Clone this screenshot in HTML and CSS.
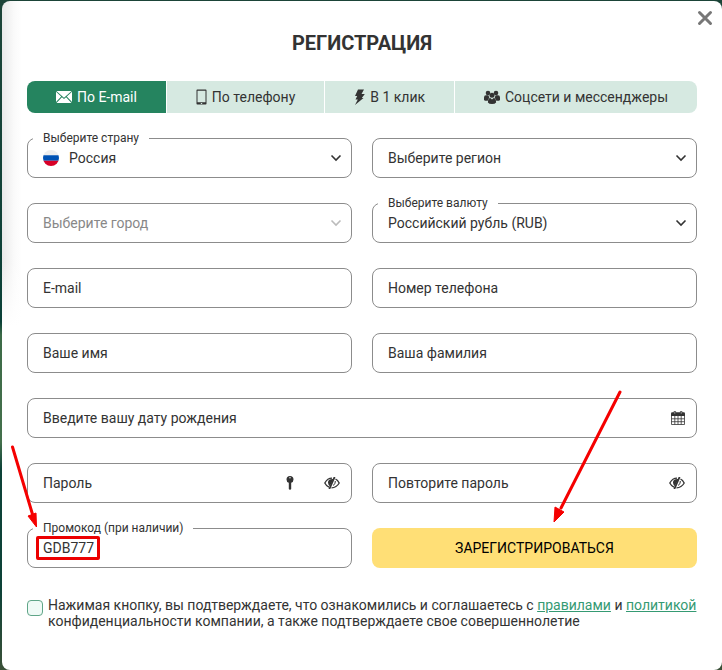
FILE: index.html
```html
<!DOCTYPE html>
<html lang="ru">
<head>
    <meta charset="UTF-8">
    <meta name="viewport" content="width=device-width, initial-scale=1.0">
    <title>Регистрация</title>
    <link rel="stylesheet" href="styles.css">
</head>
<body>
    <main class="modal">
        <button class="close" type="button" aria-label="Закрыть">
            <svg width="16" height="16" viewBox="0 0 16 16"><path d="M2.5 2.5 13.5 13.5M13.5 2.5 2.5 13.5"/></svg>
        </button>
        <h1>РЕГИСТРАЦИЯ</h1>

        <div class="tabs">
            <button class="tab active" type="button">
                <svg width="16" height="12" viewBox="0 0 16 12" fill="currentColor"><path d="M.4 0h15.2L8 6.7zM0 .8 5.2 5.6 0 11zM16 .8 10.8 5.6 16 11zM5.9 6.2 8 8l2.1-1.8 5.4 5.8H.5z"/></svg>
                По E-mail
            </button>
            <button class="tab" type="button">
                <svg width="11" height="16" viewBox="0 0 11 16" fill="currentColor"><path fill-rule="evenodd" d="M1.300.5h8.400q.8 0 .8.8v13.400q0 .8-.8.8H1.300q-.8 0-.8-.8V1.300Q.5.500 1.300.5zM1.500 1.700v11.600h8V1.700zM4.800 14h1.400v.9H4.800z"/></svg>
                По телефону
            </button>
            <button class="tab" type="button">
                <svg width="11" height="16" viewBox="0 0 11 16" fill="currentColor"><path d="M4 .5h6L7.500 5h3.300L7.800 9h1.700L1 16l2.800-5.500H1.500L3.200 7H1z"/></svg>
                В 1 клик
            </button>
            <button class="tab" type="button">
                <svg width="16" height="14" viewBox="0 0 16 14" fill="currentColor"><circle cx="4" cy="3" r="2.300"/><circle cx="12" cy="3" r="2.300"/><path d="M0 10V7.600Q0 5.200 2 5.200h2.300l1 2.300L3.700 10.800H1zM16 10V7.600Q16 5.200 14 5.200h-2.300l-1 2.300 1.600 3.300H15z"/><circle cx="8" cy="5.300" r="2.500"/><path d="M3.900 12.500q0-4.200 2.400-4.400L8 9.500l1.700-1.400q2.400.2 2.400 4.400Q11 14 8 14t-4.100-1.500z"/></svg>
                Соцсети и мессенджеры
            </button>
        </div>

        <form class="form">
            <div class="field">
                <label class="caption" for="country">Выберите страну</label>
                <svg class="flag" width="16" height="16" viewBox="0 0 16 16">
                    <clipPath id="round"><circle cx="8" cy="8" r="8"/></clipPath>
                    <g clip-path="url(#round)"><path fill="#eee" d="M0 0h16v5.300H0z"/><path fill="#0052b4" d="M0 5.300h16v5.400H0z"/><path fill="#d80027" d="M0 10.700h16V16H0z"/></g>
                </svg>
                <select id="country" class="control with-flag"><option>Россия</option></select>
                <svg class="chevron" width="12" height="8" viewBox="0 0 12 8"><path d="M1.500 1.500 6 6l4.500-4.500"/></svg>
            </div>
            <div class="field">
                <select class="control" aria-label="Выберите регион"><option>Выберите регион</option></select>
                <svg class="chevron" width="12" height="8" viewBox="0 0 12 8"><path d="M1.500 1.500 6 6l4.500-4.500"/></svg>
            </div>
            <div class="field disabled">
                <select class="control" aria-label="Выберите город" disabled><option>Выберите город</option></select>
                <svg class="chevron" width="12" height="8" viewBox="0 0 12 8"><path d="M1.500 1.500 6 6l4.500-4.500"/></svg>
            </div>
            <div class="field">
                <label class="caption" for="currency">Выберите валюту</label>
                <select id="currency" class="control"><option>Российский рубль (RUB)</option></select>
                <svg class="chevron" width="12" height="8" viewBox="0 0 12 8"><path d="M1.500 1.500 6 6l4.500-4.500"/></svg>
            </div>
            <div class="field"><input class="control" type="email" aria-label="E-mail" placeholder="E-mail"></div>
            <div class="field"><input class="control" type="tel" aria-label="Номер телефона" placeholder="Номер телефона"></div>
            <div class="field"><input class="control" type="text" aria-label="Ваше имя" placeholder="Ваше имя"></div>
            <div class="field"><input class="control" type="text" aria-label="Ваша фамилия" placeholder="Ваша фамилия"></div>
            <div class="field wide">
                <input class="control" type="text" aria-label="Введите вашу дату рождения" placeholder="Введите вашу дату рождения">
                <div class="tools">
                    <button type="button" aria-label="Календарь">
                        <svg width="14" height="14" viewBox="0 0 14 14"><path fill="#333" d="M0 2.500Q0 1.300 1.200 1.300h11.600Q14 1.300 14 2.500V5H0z"/><path fill="none" stroke="#333" stroke-width=".8" d="M.5 4v9.500h13V4M3.800 5v8.500M7 5v8.500M10.200 5v8.500M.5 7.800h13M.5 10.700h13"/><path fill="#aaa" stroke="#333" stroke-width=".7" d="M3 .4h1.600v2.700H3zM9.400.4H11v2.700H9.400z"/></svg>
                    </button>
                </div>
            </div>
            <div class="field">
                <input class="control" type="password" aria-label="Пароль" placeholder="Пароль">
                <div class="tools">
                    <button type="button" aria-label="Сгенерировать пароль">
                        <svg width="8" height="14" viewBox="0 0 8 14" fill="#333"><path fill-rule="evenodd" d="M4 0q3.500.2 3.500 3.500Q7.500 6 5.200 6.800V13L4 14l-1.200-1V6.800Q.5 6 .5 3.500.5.2 4 0zM4 1a.7.7 0 1 0 0 1.400A.7.7 0 0 0 4 1z"/></svg>
                    </button>
                    <button type="button" aria-label="Показать пароль">
                        <svg width="16" height="12" viewBox="0 0 16 12" fill="none" stroke="#333" stroke-width="1.300"><path d="M8 1.200Q3.500 1.200.8 6 2.300 9 5 10.200M11.500 2Q13.700 3 15.200 6 12.500 10.800 7.500 10.800"/><path fill="#333" stroke="none" d="M9.500 2Q4 1.500 4 5.500q0 2 1.800 3.800z"/><path stroke-width="1.800" d="M10.600 0 5.300 12"/><path stroke-width="1" d="M11.300 4Q11.800 7 9 8.500"/></svg>
                    </button>
                </div>
            </div>
            <div class="field">
                <input class="control" type="password" aria-label="Повторите пароль" placeholder="Повторите пароль">
                <div class="tools">
                    <button type="button" aria-label="Показать пароль">
                        <svg width="16" height="12" viewBox="0 0 16 12" fill="none" stroke="#333" stroke-width="1.300"><path d="M8 1.200Q3.500 1.200.8 6 2.300 9 5 10.200M11.500 2Q13.700 3 15.200 6 12.500 10.800 7.500 10.800"/><path fill="#333" stroke="none" d="M9.500 2Q4 1.500 4 5.500q0 2 1.800 3.800z"/><path stroke-width="1.800" d="M10.600 0 5.300 12"/><path stroke-width="1" d="M11.300 4Q11.800 7 9 8.500"/></svg>
                    </button>
                </div>
            </div>
            <div class="field">
                <label class="caption" for="promo">Промокод (при наличии)</label>
                <input id="promo" class="control" type="text" value="GDB777">
                <span class="mark-box"></span>
                <svg class="mark mark-promo" width="32" height="84" viewBox="0 0 32 84"><path class="line" d="M4.500 3 25 72"/><path class="head" d="m20 72 8-3 .5 14z"/></svg>
            </div>
            <div class="field">
                <button class="submit" type="button">ЗАРЕГИСТРИРОВАТЬСЯ</button>
                <svg class="mark mark-submit" width="72" height="136" viewBox="0 0 72 136"><path class="line" d="M69 4 10 120"/><path class="head" d="m4 119 9 5L3 134z"/></svg>
            </div>
            <div class="agree wide">
                <input id="agree" type="checkbox">
                <label for="agree">Нажимая кнопку, вы подтверждаете, что ознакомились и соглашаетесь с <a href="#">правилами</a> и <a href="#">политикой</a> конфиденциальности компании, а также подтверждаете свое совершеннолетие</label>
            </div>
        </form>
    </main>
</body>
</html>
```
FILE: styles.css
```css
* {
    box-sizing: border-box;
}

body {
    margin: 0;
    padding: 1px 0 0 2px;
    min-height: 100vh;
    display: flex;
    background: linear-gradient(#1c4438, #0a4037 48%, #3d6b48 50%, #44704c 66%, #0d4238 70%, #0d4238 88%, #3a5038);
    font-family: Roboto, "Liberation Sans", sans-serif;
    font-size: 14px;
    color: #333;
}

button, input, select {
    font: inherit;
    color: inherit;
}

button {
    border: 0;
    padding: 0;
    background: none;
    cursor: pointer;
}

svg {
    display: block;
    flex-shrink: 0;
}

.modal {
    position: relative;
    flex: 1;
    padding: 30px 25px;
    border-radius: 8px;
    background:
        linear-gradient(rgba(255, 255, 255, 0) 260px, #fff 325px),
        linear-gradient(90deg, #e9e9e9, #fafafa 12px, #fff 20px);
}

.close {
    position: absolute;
    top: 9px;
    right: 9px;
}

.close svg {
    stroke: #777;
    stroke-width: 3;
    stroke-linecap: round;
}

h1 {
    margin: 0 0 26px;
    font-size: 20px;
    line-height: 24px;
    font-weight: 700;
    text-align: center;
}

.tabs {
    display: flex;
    gap: 1px;
    margin-bottom: 25px;
    border-radius: 8px;
    overflow: hidden;
}

.tab {
    flex: 1 1 auto;
    display: flex;
    align-items: center;
    justify-content: center;
    gap: 5px;
    height: 32px;
    background: #d6e9e1;
    white-space: nowrap;
}

.tab.active {
    background: #25845f;
    color: #fff;
}

.form {
    display: grid;
    grid-template-columns: 1fr 1fr;
    gap: 25px 20px;
}

.wide {
    grid-column: 1 / -1;
}

.field {
    position: relative;
    height: 40px;
}

.control {
    display: block;
    width: 100%;
    height: 100%;
    padding: 0 15px;
    border: 1px solid #8c8c8c;
    border-radius: 8px;
    background: #fff;
    appearance: none;
}

.control::placeholder {
    color: #333;
    opacity: 1;
}

.control:disabled {
    color: #888;
    opacity: 1;
}

.with-flag {
    padding-left: 41px;
}

.caption {
    position: absolute;
    top: -8px;
    left: 6px;
    padding: 0 10px;
    background: #fff;
    font-size: 12px;
    line-height: 16px;
}

.flag {
    position: absolute;
    top: 12px;
    left: 16px;
}

.chevron {
    position: absolute;
    top: 16px;
    right: 10px;
    fill: none;
    stroke: #333;
    stroke-width: 1.6;
    pointer-events: none;
}

.disabled .chevron {
    stroke: #bbb;
}

.tools {
    position: absolute;
    top: 0;
    right: 12px;
    height: 100%;
    display: flex;
    align-items: center;
    gap: 30px;
}

.submit {
    width: 100%;
    height: 100%;
    border-radius: 8px;
    background: #ffdf76;
    color: #000;
}

.agree {
    display: flex;
    gap: 5px;
    margin-top: 4px;
    line-height: 16px;
}

.agree input {
    flex-shrink: 0;
    width: 16px;
    height: 16px;
    margin: 3px 0 0;
    border: 1px solid #5fa588;
    border-radius: 4px;
    background: #effaf6;
    appearance: none;
}

.agree a {
    color: #359a73;
}

/* red pointers drawn over the form */
.mark-box {
    position: absolute;
    top: 8px;
    left: 9px;
    width: 64px;
    height: 24px;
    border: 3px solid #ec0000;
    border-radius: 2px;
    pointer-events: none;
}

.mark {
    position: absolute;
    z-index: 1;
    pointer-events: none;
}

.mark .line {
    fill: none;
    stroke: #f50000;
    stroke-width: 3;
    stroke-linecap: round;
}

.mark .head {
    fill: #f50000;
    stroke: #f50000;
}

.mark-promo {
    bottom: 40px;
    left: -19px;
}

.mark-submit {
    bottom: 44px;
    left: 179px;
}
```
